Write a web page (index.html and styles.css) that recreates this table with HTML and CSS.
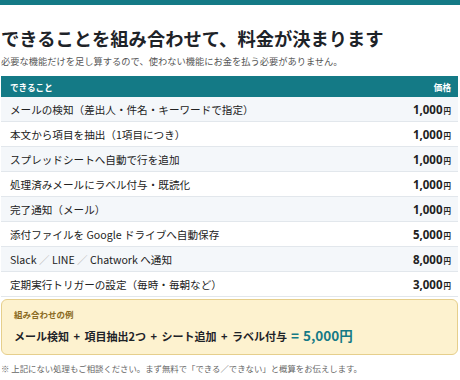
FILE: index.html
```html
<!DOCTYPE html>
<html lang="ja">
<head>
<meta charset="utf-8">
<link rel="stylesheet" href="styles.css">
</head>
<body>
<div class="topbar"></div>
<main class="page">
  <h1 class="title">できることを組み合わせて、料金が決まります</h1>
  <p class="sub">必要な機能だけを足し算するので、使わない機能にお金を払う必要がありません。</p>
  <div class="table">
    <div class="row head"><span>できること</span><span>価格</span></div>
    <div class="row"><span>メールの検知（差出人・件名・キーワードで指定）</span><span class="price">1,000<small>円</small></span></div>
    <div class="row"><span>本文から項目を抽出（1項目につき）</span><span class="price">1,000<small>円</small></span></div>
    <div class="row"><span>スプレッドシートへ自動で行を追加</span><span class="price">1,000<small>円</small></span></div>
    <div class="row"><span>処理済みメールにラベル付与・既読化</span><span class="price">1,000<small>円</small></span></div>
    <div class="row"><span>完了通知（メール）</span><span class="price">1,000<small>円</small></span></div>
    <div class="row"><span>添付ファイルを Google ドライブへ自動保存</span><span class="price">5,000<small>円</small></span></div>
    <div class="row"><span>Slack <i class="sl">／</i> LINE <i class="sl">／</i> Chatwork へ通知</span><span class="price">8,000<small>円</small></span></div>
    <div class="row"><span>定期実行トリガーの設定（毎時・毎朝など）</span><span class="price">3,000<small>円</small></span></div>
  </div>
  <div class="example">
    <div class="ex-label">組み合わせの例</div>
    <div class="ex-main">メール検知<span class="op">+</span>項目抽出2つ<span class="op">+</span>シート追加<span class="op">+</span>ラベル付与<span class="total"><span class="eq">=</span>5,000円</span></div>
  </div>
  <p class="note">※ 上記にない処理もご相談ください。まず無料で「できる／できない」と概算をお伝えします。</p>
</main>
</body>
</html>
```

FILE: styles.css
```css
* { box-sizing: border-box; }
html, body { margin: 0; padding: 0; background: #fff; }
body {
  font-family: "Noto Sans CJK JP", "Noto Sans", sans-serif;
  color: #222;
}
.topbar { height: 5px; background: #147a86; }
.page { padding: 0 2px 0 1px; }
.title {
  margin: 20px 0 0;
  font-size: 18.3px;
  line-height: 26px;
  font-weight: 700;
  color: #1e2328;
}
.sub {
  margin: 3px 0 0;
  font-size: 9.25px;
  line-height: 14px;
  color: #555;
}
.table { margin-top: 8px; }
.row {
  display: flex;
  justify-content: space-between;
  align-items: center;
  height: 25px;
  padding: 0 7px 0 9px;
  font-size: 10.6px;
  color: #222;
  border-bottom: 1px solid #e2e7ec;
}
.row:nth-child(even) { background: #f4f7fa; }
.row:nth-child(odd) { background: #fff; }
.row.head {
  height: 21px;
  background: #147a86;
  color: #fff;
  font-weight: 700;
  font-size: 8.6px;
  border-bottom: none;
}
.sl { font-style: normal; color: #bbb; }
.price { font-weight: 700; font-size: 11.5px; color: #222; font-family: "Noto Sans", "Noto Sans CJK JP", sans-serif; }
.price small { font-size: 7.5px; margin-left: 1px; font-family: "Noto Sans CJK JP", sans-serif; }
.example {
  margin-top: 2px;
  background: #fdf2cf;
  border: 1px solid #e6cf8c;
  border-radius: 6px;
  padding: 8px 12px 8px 12px;
}
.ex-label {
  font-size: 8.5px;
  line-height: 12px;
  font-weight: 700;
  color: #8a6a22;
}
.ex-main {
  margin-top: 5px;
  font-size: 11px;
  line-height: 20px;
  font-weight: 700;
  color: #1e2328;
}
.op { margin: 0 4.5px; }
.total { color: #157a86; font-size: 13.5px; margin-left: 4px; }
.eq { margin-right: 4px; }
.note {
  margin: 7px 0 0;
  font-size: 8.4px;
  line-height: 12px;
  color: #666;
}
```
